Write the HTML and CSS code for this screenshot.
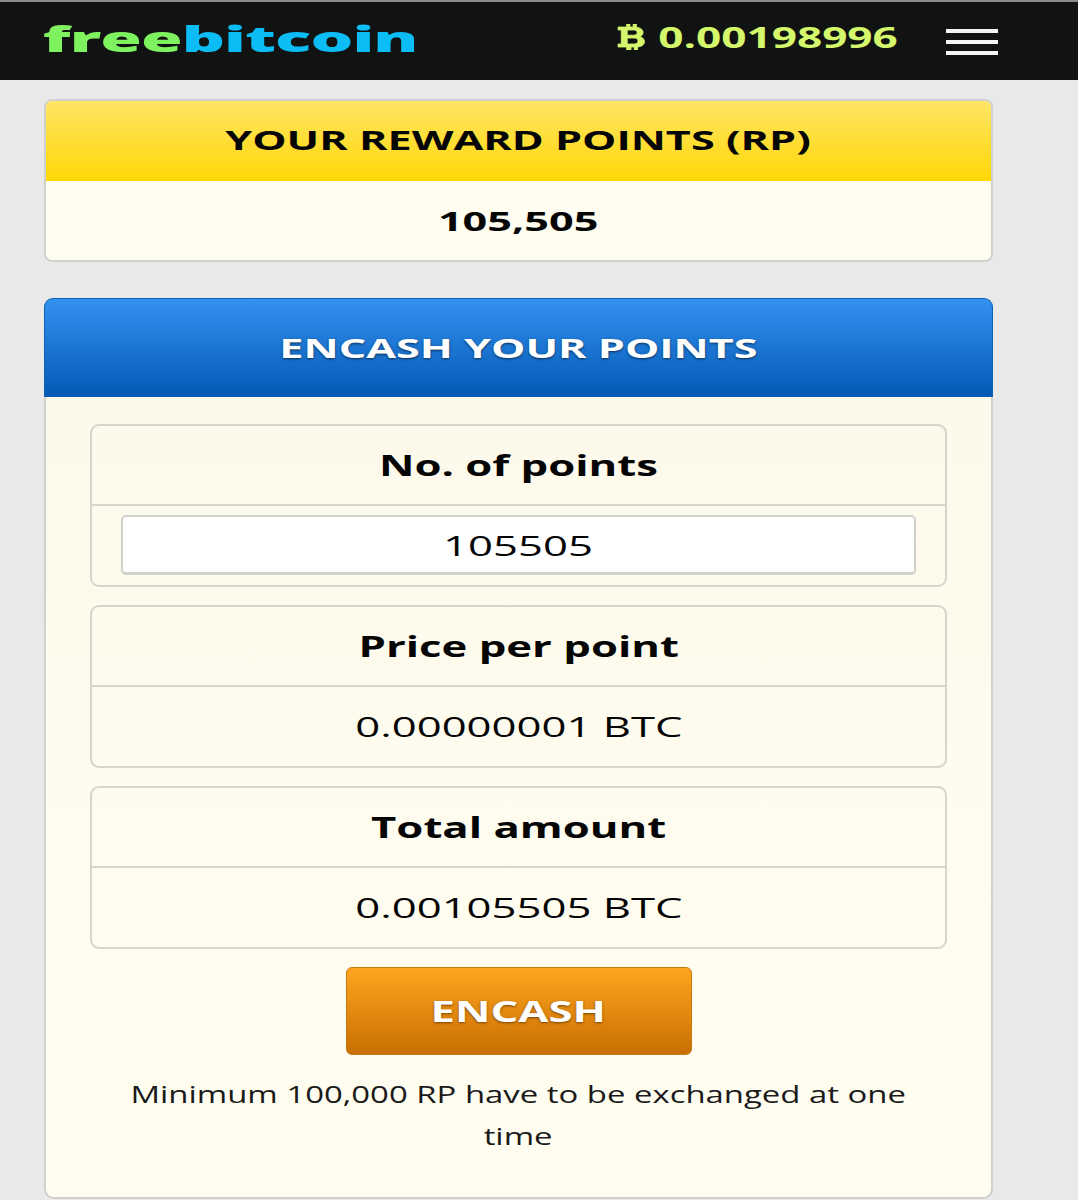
FILE: index.html
```html
<!DOCTYPE html>
<html lang="en">
<head>
    <meta charset="UTF-8">
    <meta name="viewport" content="width=device-width, initial-scale=1.0">
    <title>Reward Points</title>
    <link rel="stylesheet" href="styles.css">
</head>
<body>
    <header class="top-bar">
        <div class="logo"><span class="wide"><span class="logo-free">free</span><span class="logo-bitcoin">bitcoin</span></span></div>
        <div class="balance">
            <svg class="btc-icon" viewBox="0 0 26 26" preserveAspectRatio="none" aria-hidden="true">
                <path fill-rule="evenodd" d="M9 0h3v3h3V0h3v3.2c4 .5 6.200 2.600 6.200 5.300 0 2-1.200 3.500-3 4.200 2.500.6 4.300 2.300 4.300 4.800 0 3.200-2.500 5.200-6.500 5.500V26h-3v-3h-3v3H9v-3H1v-3h3V6H1V3h8V0zM9.500 6v5.200h6c2 0 3.200-1 3.200-2.600S17.500 6 15.500 6h-6zm0 8v6h6.500c2.200 0 3.500-1.100 3.500-3s-1.300-3-3.500-3H9.500z"/>
            </svg>
            <span class="wide">0.00198996</span>
        </div>
        <div class="menu-icon"><span></span><span></span><span></span></div>
    </header>

    <main class="content">
        <section class="card">
            <h2 class="card-title title-yellow"><span class="wide">YOUR REWARD POINTS (RP)</span></h2>
            <div class="card-value"><span class="wide">105,505</span></div>
        </section>

        <section class="card card-encash">
            <h2 class="card-title title-blue"><span class="wide">ENCASH YOUR POINTS</span></h2>
            <div class="encash-body">
                <div class="field">
                    <div class="field-label"><span class="wide">No. of points</span></div>
                    <div class="field-input-row">
                        <div class="field-input"><span class="wide">105505</span></div>
                    </div>
                </div>
                <div class="field">
                    <div class="field-label"><span class="wide">Price per point</span></div>
                    <div class="field-text"><span class="wide">0.00000001 BTC</span></div>
                </div>
                <div class="field">
                    <div class="field-label"><span class="wide">Total amount</span></div>
                    <div class="field-text"><span class="wide">0.00105505 BTC</span></div>
                </div>
                <button type="button" class="encash-btn"><span class="wide">ENCASH</span></button>
                <p class="note"><span class="wide">Minimum 100,000 RP have to be exchanged at one</span><br><span class="wide">time</span></p>
            </div>
        </section>
    </main>
</body>
</html>
```

FILE: styles.css
```css
html, body {
    margin: 0;
    padding: 0;
    height: 1200px;
    overflow: hidden;
}
body {
    font-family: "Open Sans", "DejaVu Sans", sans-serif;
    background-color: #e9e9e9;
    color: #050505;
    border-top: 2px solid #8a8a8a;
    box-sizing: border-box;
}
/* the whole page is set in a stretched face */
.wide {
    display: inline-block;
    white-space: nowrap;
    transform: scaleX(1.56);
}
.top-bar {
    height: 78px;
    background-color: #111212;
    display: flex;
    align-items: center;
    padding: 0 80px 0 44px;
}
.logo {
    flex: 0 0 372px;
    font-size: 36px;
    font-weight: 800;
    line-height: 72px;
    letter-spacing: -0.5px;
    text-align: center;
    margin-bottom: 4px;
}
.logo .wide {
    transform: scaleX(1.87);
}
.logo-free {
    color: #7ff25f;
}
.logo-bitcoin {
    color: #0cbcf5;
}
.balance {
    margin-left: auto;
    width: 280px;
    display: flex;
    align-items: center;
    justify-content: space-between;
    font-size: 28px;
    font-weight: 700;
    color: #d4f76b;
    line-height: 60px;
    margin-bottom: 8px;
}
.balance .wide {
    margin-right: 43px;
    transform: scaleX(1.575);
}
.btc-icon {
    width: 28px;
    height: 26px;
    fill: #d4f76b;
    stroke: #d4f76b;
    stroke-width: 0.8;
    flex: none;
}
.menu-icon {
    margin-left: 49px;
    width: 52px;
    display: flex;
    flex-direction: column;
    gap: 7px;
    padding-top: 2px;
}
.menu-icon span {
    height: 4px;
    background-color: #f4f4f4;
}
.content {
    padding: 19px 85px 0 44px;
}
.card {
    border: 2px solid #d0d0cc;
    border-radius: 8px;
    background-color: #fffdf0;
    text-align: center;
}
.card-title {
    margin: 0;
    font-size: 27px;
    font-weight: 700;
}
.card-title .wide {
    transform: scaleX(1.6);
}
.title-yellow {
    height: 80px;
    line-height: 78px;
    border-radius: 6px 6px 0 0;
    background: linear-gradient(#ffe566, #ffd705);
}
.card-value {
    height: 79px;
    line-height: 80px;
    font-size: 27px;
    font-weight: 700;
}
.card-value .wide {
    transform: scaleX(1.6);
}
.card-encash {
    margin-top: 36px;
    height: 901px;
    box-sizing: border-box;
    border-radius: 10px;
    background: linear-gradient(#fcf9ea, #fffdf0 75%);
}
.title-blue {
    margin: -2px -2px 0;
    height: 99px;
    line-height: 98px;
    color: #fff;
    background: linear-gradient(#3391f0, #0459b4);
    border: 1px solid #0a62b0;
    border-bottom: 0;
    box-sizing: border-box;
    text-shadow: 0 1px 2px rgba(0, 0, 0, 0.6);
    border-radius: 9px 9px 0 0;
}
.encash-body {
    padding: 27px 44px 0;
}
.field {
    border: 2px solid #d5d5cc;
    border-radius: 9px;
    margin-bottom: 18px;
}
.field-label {
    height: 78px;
    line-height: 78px;
    border-bottom: 2px solid #d5d5cc;
    font-size: 28px;
    font-weight: 700;
}
.field-text {
    height: 79px;
    line-height: 79px;
    font-size: 28px;
}
.field-input-row {
    height: 79px;
    padding: 9px 29px;
    box-sizing: border-box;
}
.field-input {
    height: 60px;
    line-height: 56px;
    box-sizing: border-box;
    border: 2px solid #d2d2cc;
    border-bottom-width: 3px;
    border-radius: 5px;
    background-color: #fff;
    font-size: 28px;
}
.encash-btn {
    display: block;
    width: 346px;
    height: 88px;
    margin: 0 auto;
    padding: 0;
    border: 1px solid #c77a10;
    border-radius: 6px;
    background: linear-gradient(#ffa51f, #c96f02);
    color: #fff;
    font-family: inherit;
    font-size: 28px;
    font-weight: 700;
    text-shadow: 0 1px 2px rgba(90, 50, 0, 0.8);
}
.note {
    margin: 18px 0 0;
    font-size: 23px;
    line-height: 42px;
    color: #1a1a1a;
}
.note .wide {
    transform: scaleX(1.43);
}
```
